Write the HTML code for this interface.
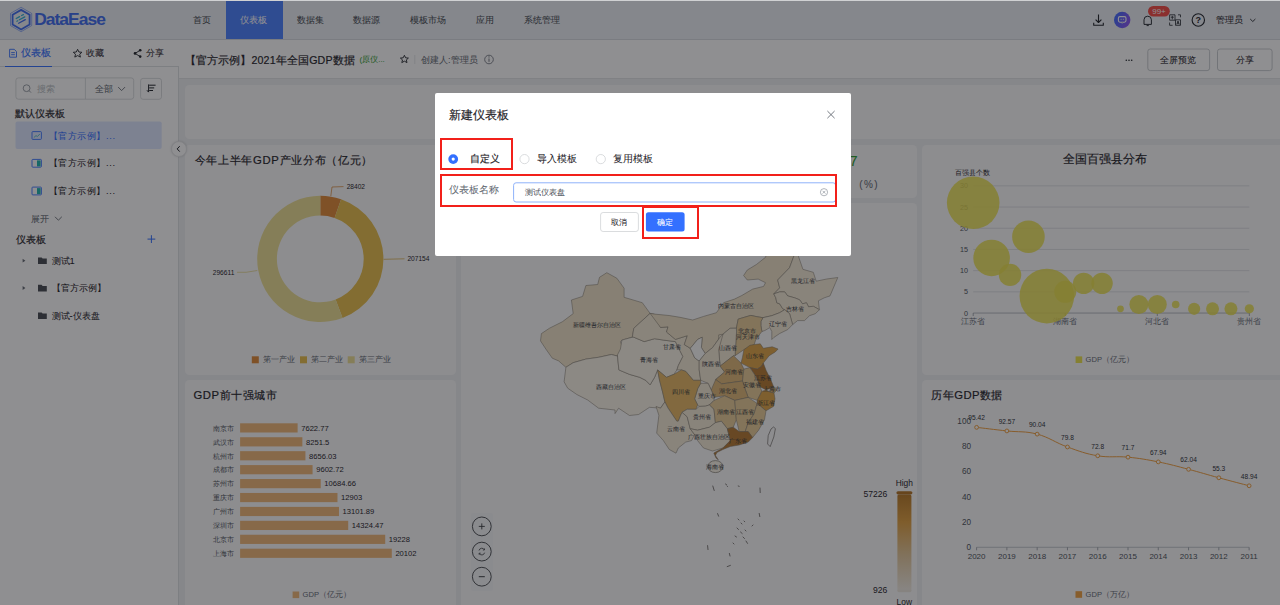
<!DOCTYPE html>
<html><head><meta charset="utf-8">
<style>
*{box-sizing:border-box;margin:0;padding:0}
html,body{width:1280px;height:605px;overflow:hidden;background:#fff}
body{font-family:"Liberation Sans",sans-serif;color:#1f2329;position:relative}
.a{position:absolute}
.t{position:absolute;white-space:nowrap;line-height:14px;height:14px}
svg{position:absolute;left:0;top:0;overflow:visible}
#hdr{left:0;top:0;width:1280px;height:40px;background:#ecf0f6;border-bottom:1px solid #d8dbe0}
.nav{top:13.3px;font-size:9.33px;color:#474c53}
#act{left:226px;top:1px;width:56.5px;height:38px;background:#4a80ff}
.side{left:0;top:40px;width:178.5px;height:565px;background:#fff}
#canvas{left:178.5px;top:77.5px;width:1102px;height:528px;background:#eef0f2;border-top:1px solid #e2e4e7}
.pn{position:absolute;background:#fbfbfc;border-radius:4.5px}
#ov{left:0;top:0;width:1280px;height:605px;background:rgba(16,18,22,0.47)}
#modal{left:435px;top:93px;width:415.5px;height:163px;background:#fff;border-radius:2px}
.rb{position:absolute;border:2px solid #f2201a}
.t{-webkit-text-stroke:0.05px currentColor}
.t.m{-webkit-text-stroke:0.18px currentColor}
</style></head><body>
<!-- HEADER -->
<div id="hdr" class="a"></div>
<div id="act" class="a"></div>
<div class="t nav" style="left:193px">首页</div>
<div class="t nav" style="left:240px;color:#fff">仪表板</div>
<div class="t nav" style="left:296.6px">数据集</div>
<div class="t nav" style="left:353.4px">数据源</div>
<div class="t nav" style="left:410.3px">模板市场</div>
<div class="t nav" style="left:476.2px">应用</div>
<div class="t nav" style="left:523.8px">系统管理</div>
<div class="t" style="left:1216px;top:13px;font-size:9.33px">管理员</div>
<div class="t" style="left:34.2px;top:7.3px;height:24px;line-height:24px;font-size:17.4px;font-weight:bold;color:#3e6cf0;letter-spacing:-0.95px">DataEase</div>
<svg width="1280" height="605" viewBox="0 0 1280 605">
 <!-- logo -->
 <polygon points="21.1,7.3 31.7,13.4 31.7,25.6 21.1,31.7 10.5,25.6 10.5,13.4" fill="none" stroke="#3e6cf0" stroke-width="0.5"/>
 <polygon points="21.1,9.9 29.6,14.8 29.6,24.6 21.1,29.5 12.6,24.6 12.6,14.8" fill="none" stroke="#3e6cf0" stroke-width="1.8"/>
 <path d="M16.2,18.5 L19.6,16.6 M21.6,15.5 L23.4,14.6 M16.9,21.2 L17.8,20.7 M19.4,19.8 L24.8,16.9" stroke="#2fb0d8" stroke-width="1.3" stroke-linecap="round"/>
 <path d="M18.6,23.3 L25.3,19.6" stroke="#3e6cf0" stroke-width="1.3" stroke-linecap="round"/>
 <!-- download -->
 <path d="M1098.5,14.6 V22.4 M1095.6,19.6 L1098.5,22.5 L1101.4,19.6 M1093.7,22.8 V25.2 H1103.3 V22.8" fill="none" stroke="#1f2329" stroke-width="1.1" stroke-linejoin="round"/>
 <defs><linearGradient id="bot" x1="0" y1="0.3" x2="1" y2="0.7"><stop offset="0" stop-color="#3c6cff"/><stop offset="1" stop-color="#8f52f2"/></linearGradient>
 <linearGradient id="vm" x1="0" y1="0" x2="0" y2="1"><stop offset="0" stop-color="#9a5e0e"/><stop offset="0.45" stop-color="#c8924a"/><stop offset="1" stop-color="#f0ebe2"/></linearGradient></defs>
 <circle cx="1122.2" cy="20" r="8.2" fill="url(#bot)"/>
 <rect x="1118.4" y="16.6" width="7.6" height="5.6" rx="1.6" fill="none" stroke="#fff" stroke-width="1.1"/>
 <path d="M1120.6,19.3 h1 M1122.8,19.3 h1 M1121.6,22.3 l0.6,1 l0.6,-1" stroke="#fff" stroke-width="0.9"/>
 <!-- bell -->
 <path d="M1144,24.4 V19.8 Q1144,16.2 1147.7,16.2 Q1151.4,16.2 1151.4,19.8 V24.4 Z M1146.6,25.6 h2.2" fill="none" stroke="#1f2329" stroke-width="0.95" stroke-linejoin="round"/>
 <rect x="1148" y="6" width="21.8" height="10.4" rx="5.2" fill="#f54a45"/>
 <text x="1159" y="14.3" font-size="8" fill="#fff" text-anchor="middle">99+</text>
 <!-- translate -->
 <path d="M1169.6,14.8 h5.4 v5.4 h-5.4 z M1175.5,19.8 h5 v5.5 h-5 z M1169.6,22.5 v2.8 h3 M1178,14.8 h2.5 v2.5 M1172.3,15.8 v3.6 M1170.8,17.2 h3 M1176.8,24.4 L1178,21 L1179.2,24.4 M1177.3,23.3 h1.4" fill="none" stroke="#1f2329" stroke-width="0.8"/>
 <!-- help -->
 <circle cx="1198.3" cy="20" r="6.2" fill="none" stroke="#1f2329" stroke-width="1.1"/>
 <text x="1198.3" y="23.3" font-size="9" font-weight="bold" fill="#1f2329" text-anchor="middle">?</text>
 <path d="M1250.2,19 L1252.8,21.5 L1255.4,19" fill="none" stroke="#1f2329" stroke-width="0.9"/>
</svg>
<!-- SIDEBAR -->
<div class="a side"></div>
<div class="a" style="left:0;top:66px;width:178.5px;height:1px;background:#dee0e3"></div>
<div class="a" style="left:178px;top:66px;width:1px;height:540px;background:#dee0e3"></div>
<div class="a" style="left:5.4px;top:65.6px;width:46.7px;height:1.4px;background:#3370ff"></div>
<div class="t m" style="left:20.9px;top:46.4px;font-size:9.5px;color:#3370ff">仪表板</div>
<div class="t" style="left:85.6px;top:46.4px;font-size:9.33px">收藏</div>
<div class="t" style="left:145.5px;top:46.4px;font-size:9.33px">分享</div>
<!-- sidebar content -->
<svg width="180" height="605" viewBox="0 0 180 605">
 <path d="M9.6,49.3 h4.6 l2.3,2.3 v5.6 h-6.9 z M11.2,52.6 h3.6 M11.2,54.7 h3.6" fill="none" stroke="#3370ff" stroke-width="0.9"/>
 <path d="M77.6,49.3 L78.9,52 L81.9,52.3 L79.7,54.2 L80.4,57.1 L77.6,55.6 L74.8,57.1 L75.5,54.2 L73.3,52.3 L76.3,52 Z" fill="none" stroke="#1f2329" stroke-width="0.9" stroke-linejoin="round"/>
 <circle cx="140.2" cy="50.3" r="1.3" fill="#1f2329"/><circle cx="140.2" cy="56.6" r="1.3" fill="#1f2329"/><circle cx="135" cy="53.4" r="1.3" fill="#1f2329"/>
 <path d="M140.2,50.3 L135,53.4 L140.2,56.6" fill="none" stroke="#1f2329" stroke-width="0.9"/>
 <rect x="15.9" y="77.9" width="117.8" height="21.3" rx="2.5" fill="#fff" stroke="#d0d3d6" stroke-width="0.8"/>
 <path d="M85.4,78 v21" stroke="#d0d3d6" stroke-width="0.8"/>
 <circle cx="26.6" cy="88.2" r="3.4" fill="none" stroke="#8f959e" stroke-width="0.9"/>
 <path d="M29,90.6 L31,92.6" stroke="#8f959e" stroke-width="0.9"/>
 <path d="M118.2,87.1 L121.6,90.6 L125,87.1" fill="none" stroke="#646a73" stroke-width="0.9"/>
 <rect x="140.6" y="78.4" width="20.9" height="20.9" rx="2.5" fill="#fff" stroke="#d0d3d6" stroke-width="0.8"/>
 <path d="M148.6,84.4 V92 M147,90.3 L148.6,92.2 M149.2,85.2 H155.6 M149.2,87.9 H154.2 M149.2,90.5 H153" fill="none" stroke="#1f2329" stroke-width="1"/>
 <rect x="15.5" y="121.6" width="146.2" height="27.3" rx="2" fill="#dee7ff"/>
 <rect x="32" y="131.6" width="9.4" height="7.8" rx="0.8" fill="none" stroke="#3370ff" stroke-width="0.9"/>
 <path d="M33.8,137.6 L36,135.6 L37.4,136.5 L39.8,134" fill="none" stroke="#35b0c0" stroke-width="0.8"/>
 <rect x="32" y="159.4" width="9.4" height="7.8" rx="0.8" fill="none" stroke="#3370ff" stroke-width="0.9"/>
 <rect x="37" y="160.4" width="3.6" height="6" fill="#1db5b0"/>
 <rect x="32" y="187.1" width="9.4" height="7.8" rx="0.8" fill="none" stroke="#3370ff" stroke-width="0.9"/>
 <rect x="37" y="188.1" width="3.6" height="6" fill="#1db5b0"/>
 <path d="M55,216.8 L58.4,220.2 L61.8,216.8" fill="none" stroke="#646a73" stroke-width="0.9"/>
 <path d="M151.4,235.2 V243 M147.5,239.1 H155.3" stroke="#3370ff" stroke-width="1"/>
 <path d="M22.6,258.8 L25.4,260.7 L22.6,262.6 Z" fill="#646a73"/>
 <path d="M22.6,286.1 L25.4,288 L22.6,289.9 Z" fill="#646a73"/>
 <path d="M38,257.5 h3.6 l1,1.1 h4.2 v5.5 h-8.8 z" fill="#474b52"/>
 <path d="M38,284.8 h3.6 l1,1.1 h4.2 v5.5 h-8.8 z" fill="#474b52"/>
 <path d="M38,312.5 h3.6 l1,1.1 h4.2 v5.5 h-8.8 z" fill="#474b52"/>
</svg>
<div class="t" style="left:37px;top:81.7px;font-size:9.33px;color:#bbbfc4">搜索</div>
<div class="t" style="left:95.2px;top:82.2px;font-size:9.33px;color:#646a73">全部</div>
<div class="t m" style="left:15.4px;top:107.4px;font-size:9.5px">默认仪表板</div>
<div class="t" style="left:48.5px;top:128.8px;font-size:9.33px;letter-spacing:0.6px;color:#3370ff">【官方示例】...</div>
<div class="t" style="left:48.5px;top:156.4px;font-size:9.33px;letter-spacing:0.6px">【官方示例】...</div>
<div class="t" style="left:48.5px;top:184.1px;font-size:9.33px;letter-spacing:0.6px">【官方示例】...</div>
<div class="t" style="left:30.7px;top:212px;font-size:9.33px;color:#646a73">展开</div>
<div class="t m" style="left:15.5px;top:232.8px;font-size:9.5px">仪表板</div>
<div class="t" style="left:51.5px;top:253.9px;font-size:9.33px">测试1</div>
<div class="t" style="left:51.5px;top:281.1px;font-size:9.33px">【官方示例】</div>
<div class="t" style="left:51.5px;top:309.1px;font-size:9.33px">测试-仪表盘</div>
<!-- CANVAS -->
<div id="canvas" class="a"></div>
<div class="pn" style="left:185px;top:85px;width:1100px;height:53.5px"></div>
<div class="pn" style="left:185px;top:144.5px;width:271.4px;height:230px"></div>
<div class="pn" style="left:185px;top:379.5px;width:271.4px;height:240px"></div>
<div class="pn" style="left:461px;top:144.5px;width:456px;height:53.3px"></div>
<div class="pn" style="left:461px;top:202.7px;width:456px;height:420px"></div>
<div class="pn" style="left:922px;top:144.5px;width:400px;height:230px"></div>
<div class="pn" style="left:922px;top:379.5px;width:400px;height:240px"></div>
<div class="a" style="left:170.5px;top:141px;width:16px;height:16px;border-radius:50%;background:#fff;box-shadow:0 0 2px rgba(0,0,0,0.15);border:0.6px solid #e5e6e8"></div>
<svg width="190" height="605" viewBox="0 0 190 605"><path d="M179.7,146.2 L177.2,148.9 L179.7,151.6" fill="none" stroke="#1f2329" stroke-width="1"/></svg>
<!-- title row -->
<div class="t m" style="left:184.5px;top:52.5px;font-size:10.67px;letter-spacing:0.15px">【官方示例】2021年全国GDP数据</div>
<div class="t" style="left:359.5px;top:53px;font-size:8px;color:#34a034">(原仪...</div>
<svg width="1280" height="80" viewBox="0 0 1280 80">
 <path d="M404.4,55.3 L405.6,57.8 L408.4,58.1 L406.3,59.9 L407,62.6 L404.4,61.2 L401.8,62.6 L402.5,59.9 L400.4,58.1 L403.2,57.8 Z" fill="none" stroke="#1f2329" stroke-width="0.9" stroke-linejoin="round"/>
 <path d="M414.8,55 V64" stroke="#dee0e3" stroke-width="0.8"/>
 <circle cx="489" cy="59.5" r="4.3" fill="none" stroke="#646a73" stroke-width="0.8"/>
 <path d="M489,58.5 v3.3" stroke="#646a73" stroke-width="0.9"/><circle cx="489" cy="56.9" r="0.55" fill="#646a73"/>
 <circle cx="1126.3" cy="60.2" r="0.8" fill="#1f2329"/><circle cx="1129" cy="60.2" r="0.8" fill="#1f2329"/><circle cx="1131.7" cy="60.2" r="0.8" fill="#1f2329"/>
 <rect x="1147.8" y="49" width="61.8" height="21.6" rx="2.5" fill="#fff" stroke="#bbbfc4" stroke-width="0.8"/>
 <rect x="1217.5" y="49" width="54.6" height="21.6" rx="2.5" fill="#fff" stroke="#bbbfc4" stroke-width="0.8"/>
</svg>
<div class="t" style="left:421px;top:52.8px;font-size:9.33px;color:#646a73">创建人:管理员</div>
<div class="t" style="left:1159.7px;top:52.8px;font-size:9.33px">全屏预览</div>
<div class="t" style="left:1235.5px;top:52.8px;font-size:9.33px">分享</div>
<!-- chart titles -->
<div class="t m" style="left:194.5px;top:153px;font-size:11.3px;letter-spacing:0.7px">今年上半年GDP产业分布（亿元）</div>
<div class="t m" style="left:193.4px;top:387.8px;font-size:11.3px;letter-spacing:0.55px">GDP前十强城市</div>
<div class="t m" style="left:1063px;top:152.4px;font-size:11.5px">全国百强县分布</div>
<div class="t m" style="left:931.3px;top:387.9px;font-size:11.3px;letter-spacing:0.45px">历年GDP数据</div>
<div class="t" style="left:849.5px;top:152.5px;height:16px;line-height:16px;font-size:14.67px;color:#2ca02c">7</div>
<div class="t" style="left:859.3px;top:178px;font-size:10px;letter-spacing:1.4px;color:#646a73">(%)</div>
<svg width="1280" height="605" viewBox="0 0 1280 605" font-family="Liberation Sans,sans-serif">
<path d="M320.30,195.80 A63.1,63.1 0 0 1 341.07,199.31 L334.58,217.92 A43.4,43.4 0 0 0 320.30,215.50 Z" fill="#e08a38"/>
<path d="M341.07,199.31 A63.1,63.1 0 0 1 342.55,317.95 L335.61,299.51 A43.4,43.4 0 0 0 334.58,217.92 Z" fill="#e8bf4c"/>
<path d="M342.55,317.95 A63.1,63.1 0 1 1 320.30,195.80 L320.30,215.50 A43.4,43.4 0 1 0 335.61,299.51 Z" fill="#eddf94"/>
<path d="M330.8,196.2 L332,187 L343.5,186.6" fill="none" stroke="#d8832c" stroke-width="0.7"/>
<path d="M383.6,259.3 L404.5,258.8" fill="none" stroke="#d9a93a" stroke-width="0.7"/>
<path d="M257.3,270.5 L246,272.3 L237,272.3" fill="none" stroke="#e2d27e" stroke-width="0.7"/>
<text x="346.7" y="186.6" font-size="6.6" fill="#1f2329" text-anchor="start" dominant-baseline="central" >28402</text>
<text x="407.4" y="258.8" font-size="6.6" fill="#1f2329" text-anchor="start" dominant-baseline="central" >207154</text>
<text x="234.3" y="272.3" font-size="6.6" fill="#1f2329" text-anchor="end" dominant-baseline="central" >296611</text>
<rect x="251.8" y="356.3" width="7" height="7" fill="#e08a38"/>
<text x="262.8" y="359.8" font-size="7.6" fill="#646a73" text-anchor="start" dominant-baseline="central" >第一产业</text>
<rect x="300" y="356.3" width="7" height="7" fill="#e8bf4c"/>
<text x="311.0" y="359.8" font-size="7.6" fill="#646a73" text-anchor="start" dominant-baseline="central" >第二产业</text>
<rect x="347.7" y="356.3" width="7" height="7" fill="#eddf94"/>
<text x="358.7" y="359.8" font-size="7.6" fill="#646a73" text-anchor="start" dominant-baseline="central" >第三产业</text>
<rect x="240.1" y="423.30" width="57.53" height="9.2" fill="#f0b878"/>
<text x="234.4" y="428.1" font-size="7.3" fill="#4e535a" text-anchor="end" dominant-baseline="central" >南京市</text>
<text x="301.2" y="428.1" font-size="7.6" fill="#1f2329" text-anchor="start" dominant-baseline="central" >7622.77</text>
<rect x="240.1" y="437.23" width="62.27" height="9.2" fill="#f0b878"/>
<text x="234.4" y="442.0" font-size="7.3" fill="#4e535a" text-anchor="end" dominant-baseline="central" >武汉市</text>
<text x="306.0" y="442.0" font-size="7.6" fill="#1f2329" text-anchor="start" dominant-baseline="central" >8251.5</text>
<rect x="240.1" y="451.16" width="65.33" height="9.2" fill="#f0b878"/>
<text x="234.4" y="456.0" font-size="7.3" fill="#4e535a" text-anchor="end" dominant-baseline="central" >杭州市</text>
<text x="309.0" y="456.0" font-size="7.6" fill="#1f2329" text-anchor="start" dominant-baseline="central" >8656.03</text>
<rect x="240.1" y="465.09" width="72.47" height="9.2" fill="#f0b878"/>
<text x="234.4" y="469.9" font-size="7.3" fill="#4e535a" text-anchor="end" dominant-baseline="central" >成都市</text>
<text x="316.2" y="469.9" font-size="7.6" fill="#1f2329" text-anchor="start" dominant-baseline="central" >9602.72</text>
<rect x="240.1" y="479.02" width="80.64" height="9.2" fill="#f0b878"/>
<text x="234.4" y="483.8" font-size="7.3" fill="#4e535a" text-anchor="end" dominant-baseline="central" >苏州市</text>
<text x="324.3" y="483.8" font-size="7.6" fill="#1f2329" text-anchor="start" dominant-baseline="central" >10684.66</text>
<rect x="240.1" y="492.95" width="97.38" height="9.2" fill="#f0b878"/>
<text x="234.4" y="497.7" font-size="7.3" fill="#4e535a" text-anchor="end" dominant-baseline="central" >重庆市</text>
<text x="341.1" y="497.7" font-size="7.6" fill="#1f2329" text-anchor="start" dominant-baseline="central" >12903</text>
<rect x="240.1" y="506.88" width="98.88" height="9.2" fill="#f0b878"/>
<text x="234.4" y="511.7" font-size="7.3" fill="#4e535a" text-anchor="end" dominant-baseline="central" >广州市</text>
<text x="342.6" y="511.7" font-size="7.6" fill="#1f2329" text-anchor="start" dominant-baseline="central" >13101.89</text>
<rect x="240.1" y="520.81" width="108.11" height="9.2" fill="#f0b878"/>
<text x="234.4" y="525.6" font-size="7.3" fill="#4e535a" text-anchor="end" dominant-baseline="central" >深圳市</text>
<text x="351.8" y="525.6" font-size="7.6" fill="#1f2329" text-anchor="start" dominant-baseline="central" >14324.47</text>
<rect x="240.1" y="534.74" width="145.11" height="9.2" fill="#f0b878"/>
<text x="234.4" y="539.5" font-size="7.3" fill="#4e535a" text-anchor="end" dominant-baseline="central" >北京市</text>
<text x="388.8" y="539.5" font-size="7.6" fill="#1f2329" text-anchor="start" dominant-baseline="central" >19228</text>
<rect x="240.1" y="548.67" width="151.71" height="9.2" fill="#f0b878"/>
<text x="234.4" y="553.5" font-size="7.3" fill="#4e535a" text-anchor="end" dominant-baseline="central" >上海市</text>
<text x="395.4" y="553.5" font-size="7.6" fill="#1f2329" text-anchor="start" dominant-baseline="central" >20102</text>
<rect x="292.6" y="591.5" width="6.6" height="6.6" fill="#f0b878"/>
<text x="302.5" y="594.8" font-size="7.6" fill="#646a73" text-anchor="start" dominant-baseline="central" >GDP（亿元）</text>
<path d="M973.2,185.85 H1249.3" stroke="#d9dbde" stroke-width="0.8"/>
<text x="968.1" y="185.8" font-size="7.2" fill="#4e535a" text-anchor="end" dominant-baseline="central" >30</text>
<path d="M973.2,207.05 H1249.3" stroke="#d9dbde" stroke-width="0.8"/>
<text x="968.1" y="207.0" font-size="7.2" fill="#4e535a" text-anchor="end" dominant-baseline="central" >25</text>
<path d="M973.2,228.25 H1249.3" stroke="#d9dbde" stroke-width="0.8"/>
<text x="968.1" y="228.2" font-size="7.2" fill="#4e535a" text-anchor="end" dominant-baseline="central" >20</text>
<path d="M973.2,249.45 H1249.3" stroke="#d9dbde" stroke-width="0.8"/>
<text x="968.1" y="249.4" font-size="7.2" fill="#4e535a" text-anchor="end" dominant-baseline="central" >15</text>
<path d="M973.2,270.65 H1249.3" stroke="#d9dbde" stroke-width="0.8"/>
<text x="968.1" y="270.6" font-size="7.2" fill="#4e535a" text-anchor="end" dominant-baseline="central" >10</text>
<path d="M973.2,291.85 H1249.3" stroke="#d9dbde" stroke-width="0.8"/>
<text x="968.1" y="291.9" font-size="7.2" fill="#4e535a" text-anchor="end" dominant-baseline="central" >5</text>
<path d="M973.2,313.05 H1249.3" stroke="#d9dbde" stroke-width="0.8"/>
<text x="968.1" y="313.0" font-size="7.2" fill="#4e535a" text-anchor="end" dominant-baseline="central" >0</text>
<path d="M973.2,313.05 H1249.3" stroke="#b8bcc2" stroke-width="0.8"/>
<path d="M973.20,313 v3" stroke="#8f959e" stroke-width="0.8"/>
<path d="M1065.25,313 v3" stroke="#8f959e" stroke-width="0.8"/>
<path d="M1157.30,313 v3" stroke="#8f959e" stroke-width="0.8"/>
<path d="M1249.35,313 v3" stroke="#8f959e" stroke-width="0.8"/>
<text x="954.7" y="172.4" font-size="7.4" fill="#1f2329" text-anchor="start" dominant-baseline="central" >百强县个数</text>
<text x="973.2" y="321.8" font-size="7.6" fill="#646a73" text-anchor="middle" dominant-baseline="central" >江苏省</text>
<text x="1065.2" y="321.8" font-size="7.6" fill="#646a73" text-anchor="middle" dominant-baseline="central" >湖南省</text>
<text x="1157.3" y="321.8" font-size="7.6" fill="#646a73" text-anchor="middle" dominant-baseline="central" >河北省</text>
<text x="1249.3" y="321.8" font-size="7.6" fill="#646a73" text-anchor="middle" dominant-baseline="central" >贵州省</text>
<circle cx="973.20" cy="202.81" r="26.3" fill="#ece24c" fill-opacity="0.85"/>
<circle cx="991.61" cy="257.93" r="18.3" fill="#ece24c" fill-opacity="0.85"/>
<circle cx="1010.02" cy="274.89" r="11.2" fill="#ece24c" fill-opacity="0.85"/>
<circle cx="1028.43" cy="236.73" r="16.3" fill="#ece24c" fill-opacity="0.85"/>
<circle cx="1046.84" cy="296.09" r="27.3" fill="#ece24c" fill-opacity="0.85"/>
<circle cx="1065.25" cy="291.85" r="11" fill="#ece24c" fill-opacity="0.85"/>
<circle cx="1083.66" cy="283.37" r="10.7" fill="#ece24c" fill-opacity="0.85"/>
<circle cx="1102.07" cy="283.37" r="10.7" fill="#ece24c" fill-opacity="0.85"/>
<circle cx="1120.48" cy="308.81" r="3.4" fill="#ece24c" fill-opacity="0.85"/>
<circle cx="1138.89" cy="304.57" r="9.5" fill="#ece24c" fill-opacity="0.85"/>
<circle cx="1157.30" cy="304.57" r="9.5" fill="#ece24c" fill-opacity="0.85"/>
<circle cx="1175.71" cy="304.57" r="3.8" fill="#ece24c" fill-opacity="0.85"/>
<circle cx="1194.12" cy="308.81" r="6.1" fill="#ece24c" fill-opacity="0.85"/>
<circle cx="1212.53" cy="308.81" r="6.5" fill="#ece24c" fill-opacity="0.85"/>
<circle cx="1230.94" cy="308.81" r="6.5" fill="#ece24c" fill-opacity="0.85"/>
<circle cx="1249.35" cy="308.81" r="4.6" fill="#ece24c" fill-opacity="0.85"/>
<rect x="1075.6" y="356.4" width="6.6" height="6.6" fill="#ece24c"/>
<text x="1085.6" y="359.7" font-size="7.6" fill="#646a73" text-anchor="start" dominant-baseline="central" >GDP（亿元）</text>
<text x="971.0" y="547.3" font-size="8.2" fill="#4e535a" text-anchor="end" dominant-baseline="central" >0</text>
<text x="971.0" y="522.2" font-size="8.2" fill="#4e535a" text-anchor="end" dominant-baseline="central" >20</text>
<text x="971.0" y="497.0" font-size="8.2" fill="#4e535a" text-anchor="end" dominant-baseline="central" >40</text>
<text x="971.0" y="471.9" font-size="8.2" fill="#4e535a" text-anchor="end" dominant-baseline="central" >60</text>
<text x="971.0" y="446.7" font-size="8.2" fill="#4e535a" text-anchor="end" dominant-baseline="central" >80</text>
<text x="971.0" y="421.6" font-size="8.2" fill="#4e535a" text-anchor="end" dominant-baseline="central" >100</text>
<path d="M976.6,547.3 H1249.1" stroke="#b8bcc2" stroke-width="0.8"/>
<path d="M976.60,547.3 v3" stroke="#8f959e" stroke-width="0.8"/>
<text x="976.6" y="556.8" font-size="8" fill="#4e535a" text-anchor="middle" dominant-baseline="central" >2020</text>
<path d="M1006.88,547.3 v3" stroke="#8f959e" stroke-width="0.8"/>
<text x="1006.9" y="556.8" font-size="8" fill="#4e535a" text-anchor="middle" dominant-baseline="central" >2019</text>
<path d="M1037.16,547.3 v3" stroke="#8f959e" stroke-width="0.8"/>
<text x="1037.2" y="556.8" font-size="8" fill="#4e535a" text-anchor="middle" dominant-baseline="central" >2018</text>
<path d="M1067.44,547.3 v3" stroke="#8f959e" stroke-width="0.8"/>
<text x="1067.4" y="556.8" font-size="8" fill="#4e535a" text-anchor="middle" dominant-baseline="central" >2017</text>
<path d="M1097.72,547.3 v3" stroke="#8f959e" stroke-width="0.8"/>
<text x="1097.7" y="556.8" font-size="8" fill="#4e535a" text-anchor="middle" dominant-baseline="central" >2016</text>
<path d="M1128.00,547.3 v3" stroke="#8f959e" stroke-width="0.8"/>
<text x="1128.0" y="556.8" font-size="8" fill="#4e535a" text-anchor="middle" dominant-baseline="central" >2015</text>
<path d="M1158.28,547.3 v3" stroke="#8f959e" stroke-width="0.8"/>
<text x="1158.3" y="556.8" font-size="8" fill="#4e535a" text-anchor="middle" dominant-baseline="central" >2014</text>
<path d="M1188.56,547.3 v3" stroke="#8f959e" stroke-width="0.8"/>
<text x="1188.6" y="556.8" font-size="8" fill="#4e535a" text-anchor="middle" dominant-baseline="central" >2013</text>
<path d="M1218.84,547.3 v3" stroke="#8f959e" stroke-width="0.8"/>
<text x="1218.8" y="556.8" font-size="8" fill="#4e535a" text-anchor="middle" dominant-baseline="central" >2012</text>
<path d="M1249.12,547.3 v3" stroke="#8f959e" stroke-width="0.8"/>
<text x="1249.1" y="556.8" font-size="8" fill="#4e535a" text-anchor="middle" dominant-baseline="central" >2011</text>
<path d="M976.60,427.36 C982.66,428.07 994.77,429.59 1006.88,430.94 C1018.99,432.29 1025.05,430.91 1037.16,434.12 C1049.27,437.33 1055.33,442.66 1067.44,446.99 C1079.55,451.33 1085.61,453.75 1097.72,455.79 C1109.83,457.83 1115.89,455.95 1128.00,457.17 C1140.11,458.39 1146.17,459.47 1158.28,461.90 C1170.39,464.33 1176.45,466.14 1188.56,469.32 C1200.67,472.49 1206.73,474.49 1218.84,477.79 C1230.95,481.08 1243.06,484.18 1249.12,485.78" fill="none" stroke="#f0a040" stroke-width="1"/>
<circle cx="976.60" cy="427.36" r="1.9" fill="#fff" stroke="#f0a040" stroke-width="1"/>
<text x="976.6" y="417.8" font-size="6.6" fill="#2b2f36" text-anchor="middle" dominant-baseline="central" >95.42</text>
<circle cx="1006.88" cy="430.94" r="1.9" fill="#fff" stroke="#f0a040" stroke-width="1"/>
<text x="1006.9" y="421.3" font-size="6.6" fill="#2b2f36" text-anchor="middle" dominant-baseline="central" >92.57</text>
<circle cx="1037.16" cy="434.12" r="1.9" fill="#fff" stroke="#f0a040" stroke-width="1"/>
<text x="1037.2" y="424.5" font-size="6.6" fill="#2b2f36" text-anchor="middle" dominant-baseline="central" >90.04</text>
<circle cx="1067.44" cy="446.99" r="1.9" fill="#fff" stroke="#f0a040" stroke-width="1"/>
<text x="1067.4" y="437.4" font-size="6.6" fill="#2b2f36" text-anchor="middle" dominant-baseline="central" >79.8</text>
<circle cx="1097.72" cy="455.79" r="1.9" fill="#fff" stroke="#f0a040" stroke-width="1"/>
<text x="1097.7" y="446.2" font-size="6.6" fill="#2b2f36" text-anchor="middle" dominant-baseline="central" >72.8</text>
<circle cx="1128.00" cy="457.17" r="1.9" fill="#fff" stroke="#f0a040" stroke-width="1"/>
<text x="1128.0" y="447.6" font-size="6.6" fill="#2b2f36" text-anchor="middle" dominant-baseline="central" >71.7</text>
<circle cx="1158.28" cy="461.90" r="1.9" fill="#fff" stroke="#f0a040" stroke-width="1"/>
<text x="1158.3" y="452.3" font-size="6.6" fill="#2b2f36" text-anchor="middle" dominant-baseline="central" >67.94</text>
<circle cx="1188.56" cy="469.32" r="1.9" fill="#fff" stroke="#f0a040" stroke-width="1"/>
<text x="1188.6" y="459.7" font-size="6.6" fill="#2b2f36" text-anchor="middle" dominant-baseline="central" >62.04</text>
<circle cx="1218.84" cy="477.79" r="1.9" fill="#fff" stroke="#f0a040" stroke-width="1"/>
<text x="1218.8" y="468.2" font-size="6.6" fill="#2b2f36" text-anchor="middle" dominant-baseline="central" >55.3</text>
<circle cx="1249.12" cy="485.78" r="1.9" fill="#fff" stroke="#f0a040" stroke-width="1"/>
<text x="1249.1" y="476.2" font-size="6.6" fill="#2b2f36" text-anchor="middle" dominant-baseline="central" >48.94</text>
<rect x="1075.5" y="591.2" width="6.6" height="6.6" fill="#f0a040"/>
<text x="1085.5" y="594.5" font-size="7.6" fill="#646a73" text-anchor="start" dominant-baseline="central" >GDP（万亿）</text>
<polygon points="606.8,272.7 616.8,278.2 624.1,288.2 624.1,297.3 642.3,302.7 650.1,313.4 633.8,328.3 632.3,337.2 621.9,340.1 620.5,341.8 624.1,351.8 625.0,354.5 618.6,356.4 611.4,354.5 598.6,357.3 585.9,359.1 573.2,362.7 565.9,367.3 558.6,360.9 552.3,358.2 545.9,349.1 540.5,340.9 541.4,333.6 549.5,328.2 562.3,321.8 573.2,313.6 571.4,300.0 582.6,296.4 585.9,285.5 597.7,284.5 599.5,277.3" fill="#f0e3c8" stroke="#7a7468" stroke-width="0.5" stroke-linejoin="round"/>
<polygon points="565.9,367.3 573.2,362.7 585.9,359.1 598.6,357.3 611.4,354.5 618.6,356.4 617.4,355.0 618.9,369.9 629.3,374.3 639.7,377.3 645.7,380.3 650.1,384.8 654.6,377.3 657.6,369.9 659.5,380.0 662.6,392.0 664.9,401.9 660.5,408.2 649.5,407.3 638.6,414.5 629.5,415.5 618.6,408.2 615.0,413.6 615.0,410.0 598.6,408.2 587.7,400.0 576.8,394.5 567.7,388.2 564.1,381.8" fill="#f9f3e6" stroke="#7a7468" stroke-width="0.5" stroke-linejoin="round"/>
<polygon points="621.9,340.1 620.4,349.1 617.4,355.0 618.9,369.9 629.3,374.3 639.7,377.3 645.7,380.3 650.1,384.8 654.6,377.3 657.6,369.9 666.5,377.3 673.9,374.3 676.9,369.9 678.4,365.4 682.9,356.5 679.9,350.6 675.4,341.6 663.5,340.1 654.6,338.7 644.2,341.6 633.8,337.2 632.3,337.2" fill="#f9f3e6" stroke="#7a7468" stroke-width="0.5" stroke-linejoin="round"/>
<polygon points="650.1,313.4 654.6,314.1 660.6,327.5 668.0,326.8 666.5,332.0 675.4,339.4 687.3,335.7 684.3,344.6 690.3,348.3 694.8,358.0 699.2,361.0 699.2,369.9 700.7,380.3 693.3,380.3 685.8,371.4 681.4,369.9 676.9,369.9 678.4,365.4 682.9,356.5 679.9,350.6 675.4,341.6 663.5,340.1 654.6,338.7 644.2,341.6 633.8,337.2 632.3,337.2 633.8,328.3" fill="#f4ead6" stroke="#7a7468" stroke-width="0.5" stroke-linejoin="round"/>
<polygon points="650.1,313.4 654.6,314.1 669.1,315.5 680.0,317.3 692.7,320.0 703.6,316.4 716.4,312.7 723.6,302.7 734.5,299.1 741.8,295.5 752.7,289.1 763.6,286.4 765.5,282.7 758.2,279.1 747.3,280.0 743.6,275.5 747.3,270.0 756.4,264.5 765.5,257.3 767.3,252.0 795.4,252.0 789.5,267.8 777.7,280.0 779.7,287.9 773.8,293.9 775.8,297.8 776.8,302.8 779.7,303.8 782.7,308.7 784.7,309.7 779.7,312.7 771.8,315.7 762.9,317.7 756.9,316.7 750.8,315.4 738.2,319.1 736.4,328.2 730.0,328.3 723.0,334.2 720.0,337.2 712.6,347.6 705.2,353.5 701.4,347.6 702.2,337.2 697.7,339.4 690.3,348.3 684.3,344.6 687.3,335.7 675.4,339.4 666.5,332.0 668.0,326.8 660.6,327.5" fill="#f0e3c8" stroke="#7a7468" stroke-width="0.5" stroke-linejoin="round"/>
<polygon points="795.4,252.0 798.4,256.2 802.9,269.3 813.3,272.3 816.2,281.2 826.7,279.0 837.8,277.5 835.6,282.7 830.0,295.9 824.3,297.8 818.4,300.8 819.4,309.7 813.4,306.3 808.5,306.8 806.5,302.8 802.5,303.8 799.6,299.8 794.6,297.8 787.7,295.9 784.7,291.9 779.7,291.9 773.8,293.9 779.7,287.9 777.7,280.0 789.5,267.8" fill="#f4ead6" stroke="#7a7468" stroke-width="0.5" stroke-linejoin="round"/>
<polygon points="773.8,293.9 779.7,291.9 784.7,291.9 787.7,295.9 794.6,297.8 799.6,299.8 802.5,303.8 806.5,302.8 808.5,306.8 813.4,306.3 819.4,309.7 815.4,313.7 809.5,315.7 804.5,320.6 797.6,320.6 792.6,324.6 789.6,313.7 784.7,309.7 782.7,308.7 779.7,303.8 776.8,302.8 775.8,297.8" fill="#f4ead6" stroke="#7a7468" stroke-width="0.5" stroke-linejoin="round"/>
<polygon points="784.7,309.7 789.6,313.7 792.6,324.6 787.7,329.6 779.7,333.5 773.8,337.5 771.8,339.5 771.8,331.5 769.8,327.6 764.9,330.5 761.9,331.5 760.9,325.6 760.9,321.6 762.9,317.7 771.8,315.7 779.7,312.7" fill="#f4ead6" stroke="#7a7468" stroke-width="0.5" stroke-linejoin="round"/>
<polygon points="738.2,319.1 750.8,315.4 756.9,316.7 762.9,317.7 760.9,321.6 760.9,325.6 761.9,331.5 755.8,339.3 754.3,344.5 743.9,349.7 735.0,355.7 736.5,331.9 736.4,328.2" fill="#e8cc98" stroke="#7a7468" stroke-width="0.5" stroke-linejoin="round"/>
<polygon points="723.0,334.2 730.0,328.3 736.4,328.2 736.5,331.9 735.0,355.7 733.5,355.7 720.1,366.1 718.7,349.7 718.7,334.9" fill="#f4ead6" stroke="#7a7468" stroke-width="0.5" stroke-linejoin="round"/>
<polygon points="690.3,348.3 697.7,339.4 702.2,337.2 701.4,347.6 705.2,353.5 699.2,361.0 694.8,358.0" fill="#fbfbfa" stroke="#7a7468" stroke-width="0.5" stroke-linejoin="round"/>
<polygon points="699.2,361.0 705.2,353.5 712.6,347.6 720.0,337.2 723.0,334.2 718.7,349.7 720.1,366.1 724.6,372.0 715.7,379.5 717.1,386.2 711.2,389.9 708.1,383.3 700.7,380.3 699.2,369.9" fill="#f4ead6" stroke="#7a7468" stroke-width="0.5" stroke-linejoin="round"/>
<polygon points="720.1,366.1 733.5,355.7 741.0,363.1 743.9,369.1 742.5,381.0 721.6,383.9 715.7,379.5 724.6,372.0" fill="#dfb878" stroke="#7a7468" stroke-width="0.5" stroke-linejoin="round"/>
<polygon points="743.9,349.7 749.9,345.3 754.3,344.5 760.3,343.8 763.3,348.3 772.2,346.8 778.1,349.0 775.2,352.0 769.2,355.7 763.3,363.1 761.8,366.1 757.3,369.1 749.9,367.6 741.0,363.1 742.5,357.2" fill="#dfa446" stroke="#7a7468" stroke-width="0.5" stroke-linejoin="round"/>
<polygon points="749.9,367.6 757.3,369.1 761.8,366.1 763.3,363.1 766.2,370.6 770.7,379.5 773.7,386.9 766.2,389.9 760.3,386.9 755.8,376.5" fill="#b67a32" stroke="#7a7468" stroke-width="0.5" stroke-linejoin="round"/>
<polygon points="743.9,369.1 749.9,367.6 755.8,376.5 760.3,386.9 761.8,391.4 757.3,400.3 748.2,397.4 745.4,389.9 742.5,381.0" fill="#e8cc98" stroke="#7a7468" stroke-width="0.5" stroke-linejoin="round"/>
<polygon points="770.7,386.9 773.7,386.9 776.7,390.0 774.0,393.0 770.0,392.0" fill="#dfb878" stroke="#7a7468" stroke-width="0.5" stroke-linejoin="round"/>
<polygon points="711.2,389.9 715.7,379.5 721.6,383.9 742.5,381.0 745.4,389.9 748.2,397.4 734.8,400.4 724.6,395.8 714.2,397.3" fill="#dfb878" stroke="#7a7468" stroke-width="0.5" stroke-linejoin="round"/>
<polygon points="697.8,388.4 700.7,383.3 708.1,383.3 711.2,389.9 714.2,397.3 714.0,400.4 709.5,404.9 705.3,406.2 699.1,406.4 697.6,404.9 694.6,398.9" fill="#f4ead6" stroke="#7a7468" stroke-width="0.5" stroke-linejoin="round"/>
<polygon points="657.6,369.9 666.5,377.3 673.9,374.3 681.4,369.9 685.8,371.4 693.3,380.3 700.7,380.3 700.7,383.3 697.8,388.4 694.6,398.9 697.6,404.9 696.1,409.3 687.2,409.3 682.0,412.3 678.3,421.2 676.8,421.2 667.8,407.8 664.9,401.9 662.6,392.0 659.5,380.0" fill="#e6b864" stroke="#7a7468" stroke-width="0.5" stroke-linejoin="round"/>
<polygon points="660.5,408.2 664.9,401.9 667.8,407.8 676.8,421.2 678.3,421.2 682.0,412.3 687.2,416.8 690.2,428.7 694.6,434.6 691.6,440.6 685.7,442.1 678.3,448.0 676.0,453.2 669.3,449.5 663.4,440.6 656.7,433.1 658.9,415.3 656.0,406.4" fill="#f4ead6" stroke="#7a7468" stroke-width="0.5" stroke-linejoin="round"/>
<polygon points="687.2,416.8 682.0,412.3 687.2,409.3 696.1,409.3 699.1,406.4 705.3,406.2 709.5,404.9 714.0,409.3 715.4,422.7 709.5,427.2 697.6,430.2 690.2,428.7" fill="#f4ead6" stroke="#7a7468" stroke-width="0.5" stroke-linejoin="round"/>
<polygon points="714.0,400.4 724.6,395.8 734.8,400.4 736.3,419.7 733.3,427.2 727.3,428.7 721.4,421.2 715.4,422.7 714.0,409.3 709.5,404.9" fill="#e8cc98" stroke="#7a7468" stroke-width="0.5" stroke-linejoin="round"/>
<polygon points="734.8,400.4 748.2,397.4 757.1,403.4 754.1,413.8 748.2,422.7 745.2,431.6 739.2,431.6 736.3,419.7" fill="#e8cc98" stroke="#7a7468" stroke-width="0.5" stroke-linejoin="round"/>
<polygon points="757.3,400.3 761.8,391.4 766.2,389.9 770.0,392.0 774.0,393.0 775.0,398.9 773.5,406.4 766.0,410.8 757.1,403.4" fill="#dfa446" stroke="#7a7468" stroke-width="0.5" stroke-linejoin="round"/>
<polygon points="757.1,403.4 766.0,410.8 764.5,419.7 758.6,430.2 752.6,437.6 748.2,431.6 745.2,431.6 748.2,422.7 754.1,413.8" fill="#e8cc98" stroke="#7a7468" stroke-width="0.5" stroke-linejoin="round"/>
<polygon points="690.2,428.7 697.6,430.2 709.5,427.2 715.4,422.7 721.4,421.2 727.3,428.7 730.3,440.6 722.9,448.0 712.5,451.0 703.5,448.0 697.6,440.6 694.6,434.6" fill="#f4ead6" stroke="#7a7468" stroke-width="0.5" stroke-linejoin="round"/>
<polygon points="727.3,428.7 733.3,427.2 739.2,431.6 745.2,431.6 748.2,431.6 752.6,437.6 748.2,442.1 739.2,445.0 730.3,446.5 722.9,449.5 716.9,452.5 715.4,455.4 718.4,459.9 716.0,458.0 713.8,453.0 722.9,448.0 730.3,440.6" fill="#b67a32" stroke="#7a7468" stroke-width="0.5" stroke-linejoin="round"/>
<ellipse cx="715.4" cy="466.6" rx="7.6" ry="6" fill="#f9f3e6" stroke="#6b6558" stroke-width="0.6"/>
<path d="M773.5,427 L775.4,428.6 L773.8,437 L770.2,446.6 L767.6,444 L768.2,435.6 L771,429 Z" fill="none" stroke="#55504a" stroke-width="0.6"/>
<path d="M712.8,486 L714.2,490.5" stroke="#4a4640" stroke-width="0.7" stroke-linecap="round"/>
<path d="M725.5,484 L726.5,484.6" stroke="#4a4640" stroke-width="0.7" stroke-linecap="round"/>
<path d="M727,486 L727.6,486.5" stroke="#4a4640" stroke-width="0.7" stroke-linecap="round"/>
<path d="M738.2,486 L739.2,486.3" stroke="#4a4640" stroke-width="0.7" stroke-linecap="round"/>
<path d="M760,488 L760.2,492.6" stroke="#4a4640" stroke-width="0.7" stroke-linecap="round"/>
<path d="M717.6,513.6 L718.6,516.2" stroke="#4a4640" stroke-width="0.7" stroke-linecap="round"/>
<path d="M759.2,513.4 L759.8,516.6" stroke="#4a4640" stroke-width="0.7" stroke-linecap="round"/>
<path d="M738,519 L739,520" stroke="#4a4640" stroke-width="0.7" stroke-linecap="round"/>
<path d="M741,523 L742,524" stroke="#4a4640" stroke-width="0.7" stroke-linecap="round"/>
<path d="M744,521 L744.8,521.8" stroke="#4a4640" stroke-width="0.7" stroke-linecap="round"/>
<path d="M737,528 L738.5,529.5" stroke="#4a4640" stroke-width="0.7" stroke-linecap="round"/>
<path d="M740.5,532 L742.2,533.5" stroke="#4a4640" stroke-width="0.7" stroke-linecap="round"/>
<path d="M745,530 L746,531" stroke="#4a4640" stroke-width="0.7" stroke-linecap="round"/>
<path d="M735,536 L736.5,537" stroke="#4a4640" stroke-width="0.7" stroke-linecap="round"/>
<path d="M743,537 L744.5,538.5" stroke="#4a4640" stroke-width="0.7" stroke-linecap="round"/>
<path d="M707.6,545.6 L708,549.6" stroke="#4a4640" stroke-width="0.7" stroke-linecap="round"/>
<path d="M746,541 L747.5,543.4" stroke="#4a4640" stroke-width="0.7" stroke-linecap="round"/>
<path d="M729.4,553.4 L730,556" stroke="#4a4640" stroke-width="0.7" stroke-linecap="round"/>
<path d="M727.2,566.6 L730.4,565.4" stroke="#4a4640" stroke-width="0.7" stroke-linecap="round"/>
<path d="M752,526 L753,525" stroke="#4a4640" stroke-width="0.7" stroke-linecap="round"/>
<path d="M733,543 L734,544" stroke="#4a4640" stroke-width="0.7" stroke-linecap="round"/>
<text x="597.4" y="324.5" font-size="6.4" fill="#2b2f36" text-anchor="middle" dominant-baseline="central">新疆维吾尔自治区</text>
<text x="611.3" y="386.8" font-size="6.4" fill="#2b2f36" text-anchor="middle" dominant-baseline="central">西藏自治区</text>
<text x="649.0" y="359.0" font-size="6.4" fill="#2b2f36" text-anchor="middle" dominant-baseline="central">青海省</text>
<text x="671.6" y="346.0" font-size="6.4" fill="#2b2f36" text-anchor="middle" dominant-baseline="central">甘肃省</text>
<text x="736.3" y="305.5" font-size="6.4" fill="#2b2f36" text-anchor="middle" dominant-baseline="central">内蒙古自治区</text>
<text x="803.0" y="280.9" font-size="6.4" fill="#2b2f36" text-anchor="middle" dominant-baseline="central">黑龙江省</text>
<text x="795.0" y="308.3" font-size="6.4" fill="#2b2f36" text-anchor="middle" dominant-baseline="central">吉林省</text>
<text x="778.0" y="323.3" font-size="6.4" fill="#2b2f36" text-anchor="middle" dominant-baseline="central">辽宁省</text>
<text x="747.4" y="330.5" font-size="6.4" fill="#2b2f36" text-anchor="middle" dominant-baseline="central">北京市</text>
<text x="748.0" y="336.0" font-size="6.4" fill="#2b2f36" text-anchor="middle" dominant-baseline="central">河天津市</text>
<text x="728.3" y="347.0" font-size="6.4" fill="#2b2f36" text-anchor="middle" dominant-baseline="central">山西省</text>
<text x="711.3" y="363.0" font-size="6.4" fill="#2b2f36" text-anchor="middle" dominant-baseline="central">陕西省</text>
<text x="755.0" y="355.0" font-size="6.4" fill="#2b2f36" text-anchor="middle" dominant-baseline="central">山东省</text>
<text x="734.3" y="371.0" font-size="6.4" fill="#2b2f36" text-anchor="middle" dominant-baseline="central">河南省</text>
<text x="762.9" y="377.0" font-size="6.4" fill="#2b2f36" text-anchor="middle" dominant-baseline="central">江苏省</text>
<text x="752.0" y="384.0" font-size="6.4" fill="#2b2f36" text-anchor="middle" dominant-baseline="central">安徽省</text>
<text x="772.0" y="388.8" font-size="6.4" fill="#2b2f36" text-anchor="middle" dominant-baseline="central">上海市</text>
<text x="728.3" y="390.0" font-size="6.4" fill="#2b2f36" text-anchor="middle" dominant-baseline="central">湖北省</text>
<text x="706.5" y="395.6" font-size="6.4" fill="#2b2f36" text-anchor="middle" dominant-baseline="central">重庆市</text>
<text x="680.7" y="391.6" font-size="6.4" fill="#2b2f36" text-anchor="middle" dominant-baseline="central">四川省</text>
<text x="766.0" y="402.0" font-size="6.4" fill="#2b2f36" text-anchor="middle" dominant-baseline="central">浙江省</text>
<text x="701.7" y="416.6" font-size="6.4" fill="#2b2f36" text-anchor="middle" dominant-baseline="central">贵州省</text>
<text x="726.3" y="411.8" font-size="6.4" fill="#2b2f36" text-anchor="middle" dominant-baseline="central">湖南省</text>
<text x="745.4" y="411.8" font-size="6.4" fill="#2b2f36" text-anchor="middle" dominant-baseline="central">江西省</text>
<text x="755.0" y="421.7" font-size="6.4" fill="#2b2f36" text-anchor="middle" dominant-baseline="central">福建省</text>
<text x="675.6" y="428.5" font-size="6.4" fill="#2b2f36" text-anchor="middle" dominant-baseline="central">云南省</text>
<text x="708.5" y="436.4" font-size="6.4" fill="#2b2f36" text-anchor="middle" dominant-baseline="central">广西壮族自治区</text>
<text x="737.5" y="440.4" font-size="6.4" fill="#2b2f36" text-anchor="middle" dominant-baseline="central">广东省</text>
<text x="715.2" y="466.2" font-size="6.4" fill="#2b2f36" text-anchor="middle" dominant-baseline="central">海南省</text>
<rect x="471" y="513" width="22" height="78" rx="2" fill="#f4f5f6" fill-opacity="0.6"/>
<circle cx="481.8" cy="526.4" r="9.4" fill="none" stroke="#3a3d42" stroke-width="0.9"/>
<circle cx="481.8" cy="551.6" r="9.4" fill="none" stroke="#3a3d42" stroke-width="0.9"/>
<circle cx="481.8" cy="576.7" r="9.4" fill="none" stroke="#3a3d42" stroke-width="0.9"/>
<path d="M478.8,526.4 h6 M481.8,523.4 v6" stroke="#3a3d42" stroke-width="0.9"/>
<path d="M478.8,576.7 h6" stroke="#3a3d42" stroke-width="1"/>
<path d="M479,550.5 A2.9,2.9 0 0 1 484.4,549.8 M484.6,552.7 A2.9,2.9 0 0 1 479.2,553.4 M484.4,548.4 v1.6 h-1.5 M479.2,554.8 v-1.6 h1.5" fill="none" stroke="#3a3d42" stroke-width="0.8"/>
<rect x="897.4" y="494.6" width="14" height="97.2" rx="1.5" fill="url(#vm2)"/>
<rect x="896.4" y="491.2" width="16" height="3.2" rx="1.6" fill="#b47424"/>
<rect x="897.4" y="589.4" width="14" height="2.8" rx="1.4" fill="#efe9df"/>
<text x="904.3" y="482.7" font-size="8.4" fill="#1f2329" text-anchor="middle" dominant-baseline="central">High</text>
<text x="904.3" y="602" font-size="8.4" fill="#1f2329" text-anchor="middle" dominant-baseline="central">Low</text>
<text x="887.4" y="494" font-size="8.6" fill="#1f2329" text-anchor="end" dominant-baseline="central">57226</text>
<text x="887.4" y="590.4" font-size="8.6" fill="#1f2329" text-anchor="end" dominant-baseline="central">926</text>
<defs><linearGradient id="vm2" x1="0" y1="0" x2="0" y2="1"><stop offset="0" stop-color="#b87a28"/><stop offset="0.28" stop-color="#e0a040"/><stop offset="0.62" stop-color="#e4c89a"/><stop offset="1" stop-color="#f2eee8"/></linearGradient></defs>
</svg>
<!-- OVERLAY -->
<div id="ov" class="a"></div>
<div class="a" style="left:0;top:0;width:1280px;height:1px;background:#d0d1d3"></div>
<!-- MODAL -->
<div id="modal" class="a"></div>
<div class="t m" style="left:449px;top:108.3px;font-size:12.3px">新建仪表板</div>
<svg width="1280" height="605" viewBox="0 0 1280 605">
 <path d="M827.4,111 L834.6,118.2 M834.6,111 L827.4,118.2" stroke="#646a73" stroke-width="0.9"/>
 <circle cx="453.2" cy="159.1" r="4.9" fill="#3370ff"/>
 <circle cx="453.2" cy="159.1" r="1.6" fill="#fff"/>
 <circle cx="524.5" cy="159.1" r="4.6" fill="#fff" stroke="#d0d3d6" stroke-width="0.8"/>
 <circle cx="600.8" cy="159.1" r="4.6" fill="#fff" stroke="#d0d3d6" stroke-width="0.8"/>
 <rect x="513.6" y="182.8" width="322" height="19.2" rx="2.5" fill="#fff" stroke="#8fb2fa" stroke-width="1"/>
 <circle cx="824" cy="192.2" r="3.6" fill="none" stroke="#8f959e" stroke-width="0.7"/>
 <path d="M822.6,190.8 L825.4,193.6 M825.4,190.8 L822.6,193.6" stroke="#8f959e" stroke-width="0.7"/>
 <rect x="600.6" y="212.5" width="37.8" height="19" rx="2.5" fill="#fff" stroke="#d0d3d6" stroke-width="0.8"/>
 <rect x="645.9" y="212.3" width="38.7" height="19.3" rx="2.5" fill="#3370ff"/>
</svg>
<div class="t m" style="left:470.4px;top:152px;font-size:9.5px">自定义</div>
<div class="t" style="left:536.8px;top:152px;font-size:9.5px">导入模板</div>
<div class="t" style="left:613px;top:152px;font-size:9.5px">复用模板</div>
<div class="t" style="left:448.9px;top:183.3px;font-size:9.5px;color:#646a73">仪表板名称</div>
<div class="t" style="left:524.5px;top:185.1px;font-size:8.3px;color:#52575e">测试仪表盘</div>
<div class="t" style="left:610.8px;top:215px;font-size:8.3px">取消</div>
<div class="t" style="left:656.6px;top:215px;font-size:8.3px;color:#fff">确定</div>
<div class="rb" style="left:440px;top:137.5px;width:72.5px;height:32.5px"></div>
<div class="rb" style="left:440px;top:173.5px;width:396.5px;height:33.5px"></div>
<div class="rb" style="left:641.5px;top:205.5px;width:57.5px;height:33px"></div>
</body></html>
